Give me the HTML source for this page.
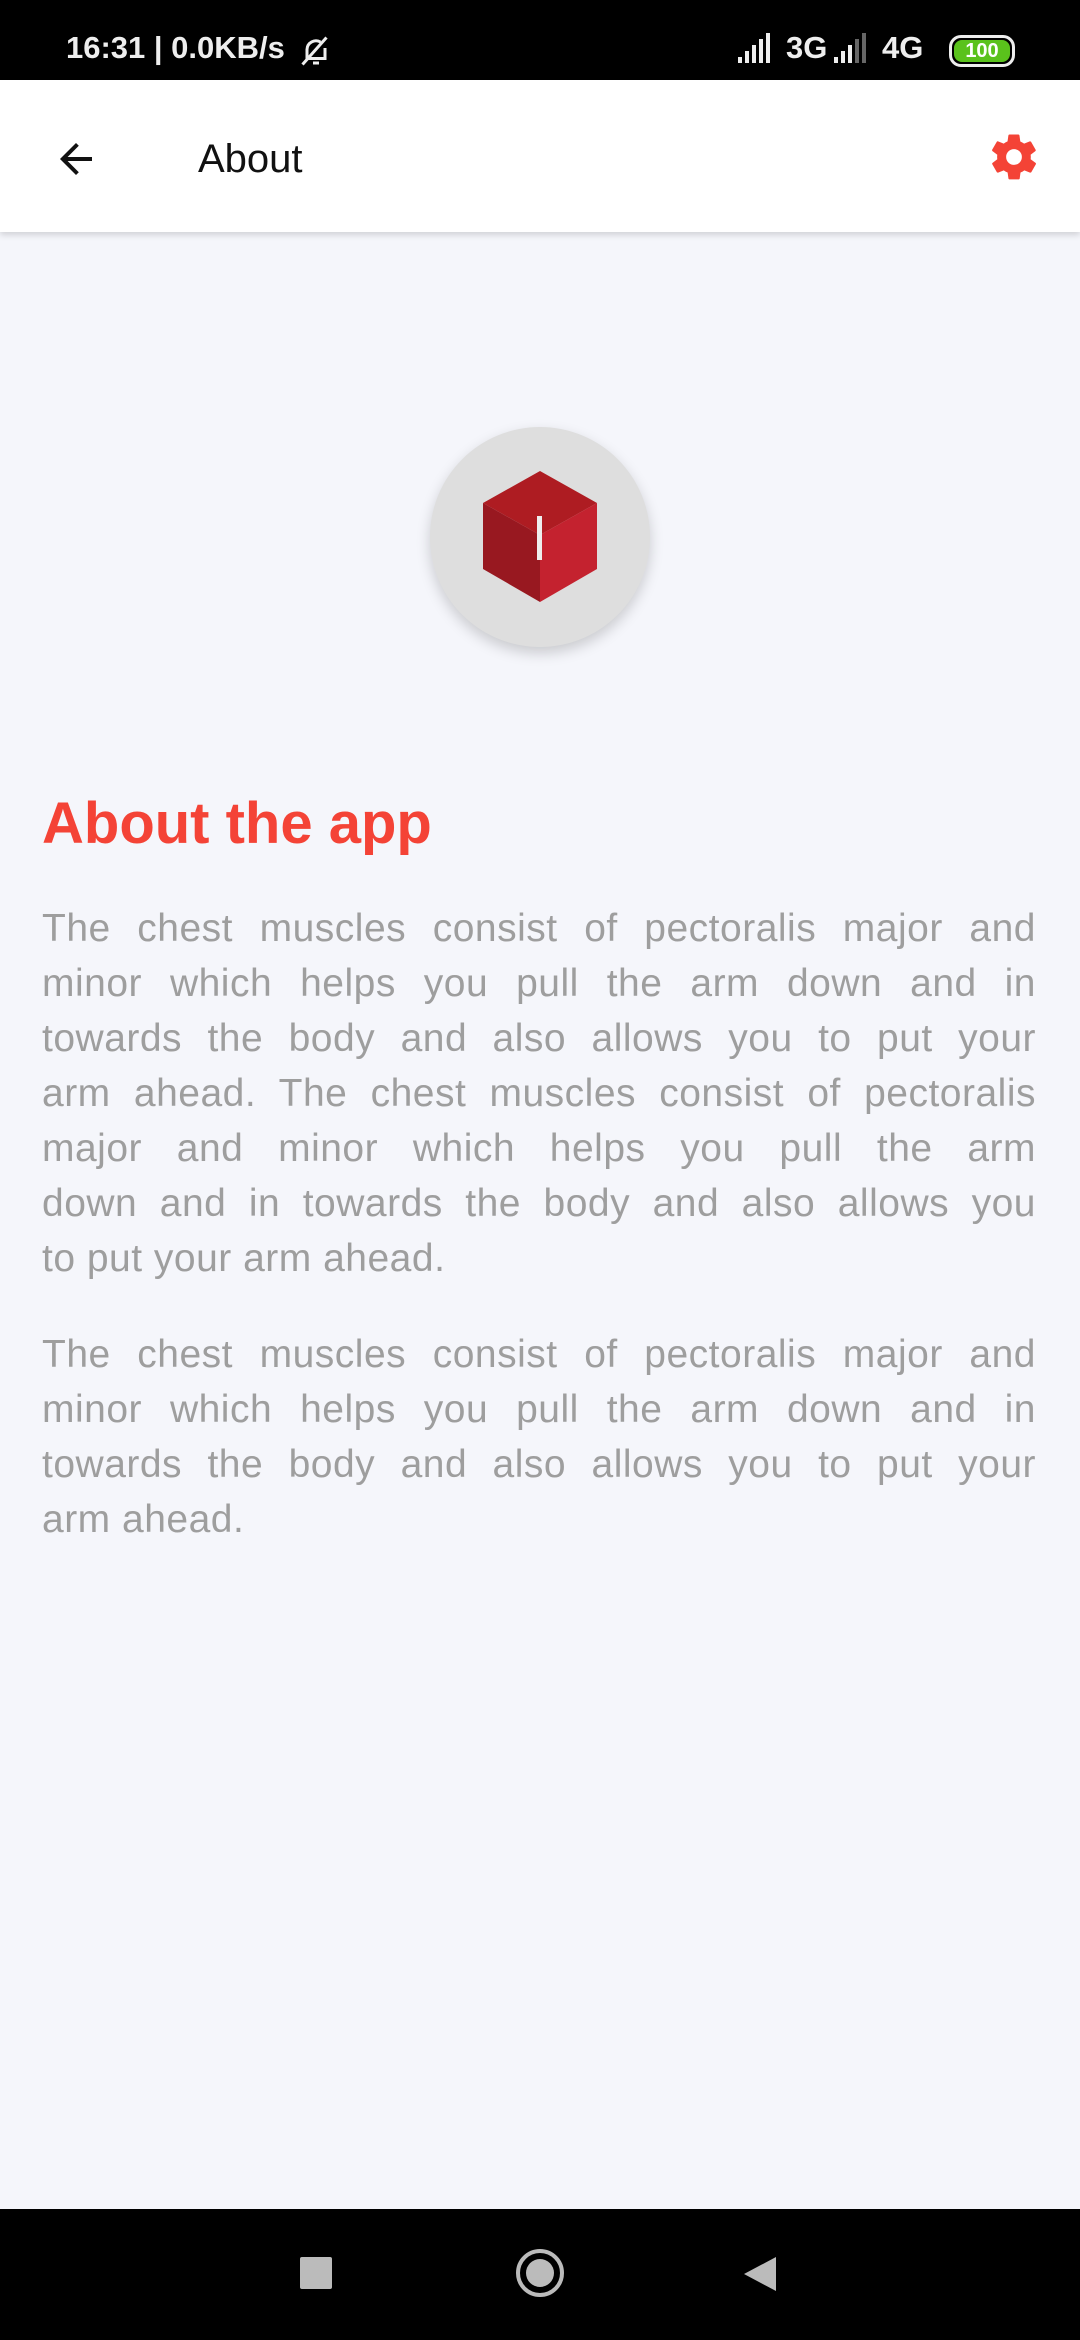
<!DOCTYPE html>
<html><head><meta charset="utf-8"><style>
*{margin:0;padding:0;box-sizing:border-box}
body{width:1080px;height:2340px;background:#f5f6fb;font-family:"Liberation Sans",sans-serif;position:relative;overflow:hidden}
.sb{position:absolute;top:0;left:0;width:1080px;height:80px;background:#000;color:#eee;font-weight:bold;font-size:31px}
.bar{position:absolute;top:80px;left:0;width:1080px;height:152px;background:#fff;box-shadow:0 3px 6px rgba(0,0,0,.15)}
.title{position:absolute;left:198px;top:137px;font-size:40px;color:#111}
h1{position:absolute;left:42px;top:790px;font-size:58px;color:#f44336;font-weight:bold}
.p{position:absolute;left:42px;width:994px;font-size:39px;line-height:55px;color:#9e9e9e;letter-spacing:0.5px}
.p div{text-align:justify;text-align-last:justify;white-space:nowrap;height:55px}
.p div.l{text-align-last:left}
.nav{position:absolute;left:0;top:2209px;width:1080px;height:131px;background:#000}
</style></head><body>
<div class="sb">
<span style="position:absolute;left:66px;top:30px">16:31 | 0.0KB/s</span>
<svg style="position:absolute;left:298px;top:33px" width="36" height="36" viewBox="0 0 24 24" fill="none" stroke="#eee" stroke-width="2"><path d="M6 17V11a6 6 0 0 1 9-5M18 10v7H5M10 20h4M3 21L19 3"/></svg>
<svg style="position:absolute;left:738px;top:33px" width="40" height="30"><rect x="0" y="24" width="4" height="6" fill="#eee"/><rect x="7" y="18" width="4" height="12" fill="#eee"/><rect x="14" y="12" width="4" height="18" fill="#eee"/><rect x="21" y="6" width="4" height="24" fill="#eee"/><rect x="28" y="0" width="4" height="30" fill="#eee"/></svg>
<span style="position:absolute;left:786px;top:30px">3G</span>
<svg style="position:absolute;left:834px;top:33px" width="40" height="30"><rect x="0" y="24" width="4" height="6" fill="#eee"/><rect x="7" y="18" width="4" height="12" fill="#eee"/><rect x="14" y="12" width="4" height="18" fill="#eee"/><rect x="21" y="6" width="4" height="24" fill="#666"/><rect x="28" y="0" width="4" height="30" fill="#666"/></svg>
<span style="position:absolute;left:882px;top:30px">4G</span>
<div style="position:absolute;left:949px;top:35px;width:66px;height:32px;border:3px solid #eee;border-radius:12px;padding:2px"><div style="background:#5ac21c;width:100%;height:100%;border-radius:8px;font-size:20px;color:#fff;text-align:center;line-height:22px">100</div></div>
</div>
<div class="bar">
<svg style="position:absolute;left:52px;top:55px" width="48" height="48" viewBox="0 0 24 24"><path d="M20 11H7.8l5.6-5.6L12 4l-8 8 8 8 1.4-1.4L7.8 13H20z" fill="#111"/></svg>
</div>
<div class="title">About</div>
<svg style="position:absolute;left:987px;top:130px" width="54" height="54" viewBox="0 0 24 24"><path fill="#f44336" d="M19.4 13c.04-.3.06-.6.06-1s-.02-.7-.07-1l2.1-1.6c.2-.15.24-.42.12-.64l-2-3.460c-.12-.22-.39-.3-.61-.22l-2.5 1c-.52-.4-1.08-.73-1.7-.98l-.37-2.65A.5.5 0 0 0 14 2h-4a.5.5 0 0 0-.5.42l-.37 2.65c-.62.25-1.180.59-1.7.98l-2.5-1c-.22-.08-.49 0-.61.22l-2 3.46c-.13.22-.07.49.12.64L4.57 11c-.04.3-.07.65-.07 1s.03.7.07 1l-2.1 1.6c-.2.15-.25.42-.12.64l2 3.46c.12.22.39.3.61.22l2.5-1c.52.4 1.08.73 1.7.98l.37 2.65c.04.24.25.42.5.42h4c.25 0 .46-.18.5-.42l.37-2.65c.62-.25 1.18-.58 1.7-.98l2.5 1c.22.08.49 0 .61-.22l2-3.46c.12-.22.07-.49-.12-.64zM12 15.5A3.5 3.5 0 1 1 12 8.5a3.5 3.5 0 0 1 0 7z"/></svg>
<div style="position:absolute;left:430px;top:427px;width:220px;height:220px;border-radius:50%;background:#dedede;box-shadow:0 6px 14px rgba(0,0,0,.18)"></div>
<svg style="position:absolute;left:0;top:0" width="1080" height="700">
<polygon points="540,471 597,503 540,535 483,503" fill="#ae1c22"/>
<polygon points="483,503 540,535 540,602 483,569" fill="#981820"/>
<polygon points="597,503 540,535 540,602 597,569" fill="#c4222f"/>
<rect x="537" y="516" width="5" height="44" fill="#eee"/>
</svg>
<h1>About the app</h1>
<div class="p" style="top:901px">
<div>The chest muscles consist of pectoralis major and</div>
<div>minor which helps you pull the arm down and in</div>
<div>towards the body and also allows you to put your</div>
<div>arm ahead. The chest muscles consist of pectoralis</div>
<div>major and minor which helps you pull the arm</div>
<div>down and in towards the body and also allows you</div>
<div class="l">to put your arm ahead.</div>
</div>
<div class="p" style="top:1327px">
<div>The chest muscles consist of pectoralis major and</div>
<div>minor which helps you pull the arm down and in</div>
<div>towards the body and also allows you to put your</div>
<div class="l">arm ahead.</div>
</div>
<div class="nav">
<div style="position:absolute;left:300px;top:48px;width:32px;height:32px;background:#bbb;border-radius:2px"></div>
<div style="position:absolute;left:516px;top:40px;width:48px;height:48px;border:4px solid #bbb;border-radius:50%"><div style="margin:6px;width:28px;height:28px;background:#bbb;border-radius:50%"></div></div>
<svg style="position:absolute;left:742px;top:46px" width="36" height="38"><polygon points="34,2 34,36 2,19" fill="#bbb"/></svg>
</div>
</body></html>
